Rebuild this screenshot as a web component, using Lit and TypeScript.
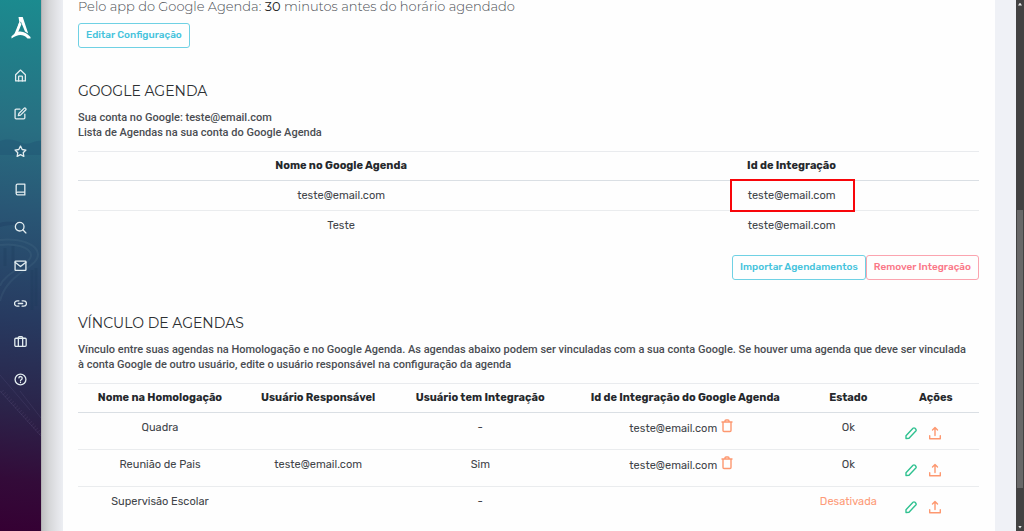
import { LitElement, html, css, svg, nothing } from "lit";
import { customElement } from "lit/decorators.js";

const menu = [
  { label: "Início", icon: svg`<path d="M3 10.500 12 2l9 8.500V22H3z"/><path d="M8.500 22v-8q0-1 1-1h5q1 0 1 1v8"/>` },
  { label: "Editar", icon: svg`<path d="M11 4H4q-2 0-2 2v14q0 2 2 2h14q2 0 2-2v-7"/><path d="m18.500 2.500a2 2 0 0 1 3 3L12 15l-4 1 1-4z"/>` },
  { label: "Favoritos", icon: svg`<path d="m12 2 3.100 6.300 6.900 1-5 4.900 1.200 6.800-6.200-3.200L5.800 21 7 14.200 2 9.300l6.900-1z"/>` },
  { label: "Cadastros", icon: svg`<path d="M4 19.500V4.500A2.500 2.500 0 0 1 6.500 2H20v20H6.500A2.500 2.500 0 0 1 4 19.500 2.500 2.500 0 0 1 6.500 17H20"/>` },
  { label: "Pesquisar", icon: svg`<circle cx="10.500" cy="10.500" r="8"/><path d="m22 22-5.700-5.700"/>` },
  { label: "Mensagens", icon: svg`<rect x="2" y="4" width="20" height="17" rx="1"/><path d="m2 6 10 8 10-8"/>` },
  { label: "Links", icon: svg`<path d="M15 7h3a5 5 0 0 1 0 10h-3M9 17H6A5 5 0 0 1 6 7h3M8 12h8"/>` },
  { label: "Negócios", icon: svg`<rect x="1.500" y="6" width="21" height="15" rx="2"/><path d="M8 21V5q0-2 2-2h4q2 0 2 2v16"/>` },
  { label: "Ajuda", icon: svg`<circle cx="12" cy="12" r="10"/><path d="M9 9a3 3 0 0 1 6 1c0 2-3 2.500-3 4M12 17v.500"/>` },
];

const calendars = [
  { name: "teste@email.com", id: "teste@email.com", marked: true },
  { name: "Teste", id: "teste@email.com", marked: false },
];

const links = [
  { name: "Quadra", user: "", integrated: "-", id: "teste@email.com", state: "Ok" },
  { name: "Reunião de Pais", user: "teste@email.com", integrated: "Sim", id: "teste@email.com", state: "Ok" },
  { name: "Supervisão Escolar", user: "", integrated: "-", id: "", state: "Desativada" },
];

@customElement("side-menu")
class SideMenu extends LitElement {
  static styles = css`
    :host {
      display: block;
      position: relative;
      overflow: hidden;
      background: linear-gradient(188deg, #1b8b8f 0%, #286f82 24%, #295675 40%, #273a60 60%, #2b2349 77%, #330b39 90%, #350033 100%);
      box-shadow: 0 0 1px #777;
    }
    .scene { position: absolute; inset: 0; width: 100%; height: 100%; }
    nav { position: relative; display: flex; flex-direction: column; align-items: center; }
    a { display: flex; align-items: center; justify-content: center; width: 100%; height: 38px; color: #e3edf0; }
    .brand { height: 56px; color: #fff; }
    .brand svg { width: 20px; height: 24px; }
    .icon { width: 13px; height: 13px; fill: none; stroke: currentColor; stroke-width: 2.400; stroke-linecap: round; stroke-linejoin: round; }
  `;
  render() {
    return html`
      <svg class="scene" viewBox="0 0 41 531" preserveAspectRatio="none" aria-hidden="true" fill="none">
        <path d="M0 141c9-3 15-1 22 2s14-4 19-2v14H0z" fill="#1f5274" opacity=".4"/>
        <path d="M0 223c8-3 16 1 25-3-5 6-16 4-25 7z" fill="#1f4265" opacity=".5"/>
        <path d="M0 240c20-2 37 4 38 14 1 14-31 18-38 47M0 245c15-2 30 2 31 10 0 10-26 17-31 31" stroke="#6b91a6" stroke-width="2" opacity=".12"/>
        <path d="M5 248v18M13 246v16M32 270v40M36 268v38" stroke="#183858" stroke-width="3" opacity=".25"/>
        <path d="M0 391l41 45M20 391l21 27M0 375l30 35" stroke="#7b70a0" opacity=".16"/>
        <path d="M2 391l39 43" stroke="#8f7da8" stroke-width="4" stroke-dasharray="1 2" opacity=".12"/>
      </svg>
      <nav aria-label="Menu principal">
        <a class="brand" href="#" aria-label="Página inicial">
          <svg viewBox="0 0 20 24" fill="currentColor"><path d="M7.500 1h4.200l5.500 16.500-3.200-2L9.800 5.500 6.300 16c5.200-1.500 9.200 1 13.200 5v1.500h-3C11.500 17.500 6.500 18.500 .500 22.500v-2.300L5 16.500 8.300 6z"/><path d="M8.300 6 3 19l4-2.500L10.500 8z"/></svg>
        </a>
        ${menu.map((m) => html`<a href="#" aria-label=${m.label}><svg class="icon" viewBox="0 0 24 24">${m.icon}</svg></a>`)}
      </nav>`;
  }
}

@customElement("scroll-rail")
class ScrollRail extends LitElement {
  static styles = css`
    :host { display: grid; grid-template-rows: 8px 202fr 278fr 35fr 8px; background: #424242; justify-items: center; align-items: center; }
    .thumb { grid-row: 3; width: 6px; height: 100%; background: #686868; }
    .up, .down { width: 4px; height: 3px; background: #e8e8e8; clip-path: polygon(50% 0, 100% 100%, 0 100%); }
    .up { grid-row: 1; }
    .down { grid-row: 5; clip-path: polygon(0 0, 100% 0, 50% 100%); }
  `;
  render() {
    return html`<span class="up"></span><span class="thumb"></span><span class="down"></span>`;
  }
}

@customElement("app-root")
class AppRoot extends LitElement {
  static styles = css`
    :host {
      display: grid;
      grid-template-columns: 41px minmax(0, 1fr) 8px;
      height: 100vh;
      overflow: hidden;
      font: 11px/16px Rubik, Roboto, sans-serif;
      color: #414449;
    }
    main {
      overflow: hidden;
      padding: 0 21px 0 22px;
      background: linear-gradient(90deg, #bdbdbf 0, #d5d6d8 8px, #e3e4e8 16px, #eff1f6 24px);
    }
    .card { min-height: 100%; padding: 0 16px 0 15px; background: #fefefe; }
    .lead { margin: 0 0 11px; font: 300 13px/12px Montserrat, "Open Sans", sans-serif; color: #4c4f54; }
    .lead strong { font-weight: 400; color: #222; }
    h2 { margin: 0; padding: 34px 0 10px; font: 400 14px/18px Montserrat, Inter, sans-serif; color: #2c2f32; }
    p { margin: 0; }
    .note { font: 500 11px/15px Roboto, sans-serif; margin-bottom: 11px; color: #4a4d52; }
    button { font: inherit; background: none; border: 0; padding: 0; cursor: pointer; }
    .btn { height: 25px; padding: 0 7px; border: 1px solid; border-radius: 3px; font-size: 10px; font-weight: 500; line-height: 15px; }
    .info { color: #45c3dc; border-color: #6fd1e4; }
    .danger { color: #fa7787; border-color: #fba4af; }
    .tools { display: flex; justify-content: flex-end; padding-top: 15px; }
    table { width: 100%; border-collapse: collapse; table-layout: fixed; text-align: center; }
    th { height: 28px; padding: 0; border-top: 1px solid #e9ebee; border-bottom: 1px solid #dadfe4; font-weight: 700; color: #25282c; }
    td { height: 29px; padding: 0; border-top: 1px solid #eaecee; }
    .links td { height: 29px; padding: 7px 0 0; vertical-align: top; }
    .c58 { width: 58.400%; }
    .c18 { width: 18.200%; }
    .c17 { width: 16.900%; }
    .c19 { width: 19.100%; }
    .c26 { width: 26.400%; }
    .c10 { width: 9.800%; }
    .mark { position: relative; }
    .mark::after { content: ""; position: absolute; inset: -10px -19px -10px -18px; border: 2px solid #f8060a; }
    .off { color: #fd9b78; }
    .ident { display: flex; justify-content: center; gap: 4px; padding: 1px 8px 0 0; }
    .ident button { height: 14px; margin-top: -2px; }
    .acts { display: flex; justify-content: center; gap: 12px; padding: 6px 26px 0 0; }
    .ic { display: block; width: 12px; height: 14px; fill: none; stroke: currentColor; stroke-width: 1.400; stroke-linejoin: round; stroke-linecap: round; }
    .orange { color: #fd9870; }
    .green { color: #2fc190; }
  `;

  render() {
    return html`
      <side-menu></side-menu>
      <main>
        <div class="card">
          <p class="lead">Pelo app do Google Agenda: <strong>30</strong> minutos antes do horário agendado</p>
          <button class="btn info">Editar Configuração</button>

          <h2>GOOGLE AGENDA</h2>
          <p class="note">Sua conta no Google: teste@email.com<br />Lista de Agendas na sua conta do Google Agenda</p>
          <table>
            <colgroup><col class="c58" /><col /></colgroup>
            <thead><tr><th>Nome no Google Agenda</th><th>Id de Integração</th></tr></thead>
            <tbody>
              ${calendars.map((c) => html`<tr><td>${c.name}</td><td><span class=${c.marked ? "mark" : "plain"}>${c.id}</span></td></tr>`)}
            </tbody>
          </table>
          <div class="tools">
            <button class="btn info">Importar Agendamentos</button>
            <button class="btn danger">Remover Integração</button>
          </div>

          <h2>VÍNCULO DE AGENDAS</h2>
          <p class="note">Vínculo entre suas agendas na Homologação e no Google Agenda. As agendas abaixo podem ser vinculadas com a sua conta Google. Se houver uma agenda que deve ser vinculada<br />à conta Google de outro usuário, edite o usuário responsável na configuração da agenda</p>
          <table class="links">
            <colgroup><col class="c18" /><col class="c17" /><col class="c19" /><col class="c26" /><col class="c10" /><col /></colgroup>
            <thead><tr>
              <th>Nome na Homologação</th><th>Usuário Responsável</th><th>Usuário tem Integração</th>
              <th>Id de Integração do Google Agenda</th><th>Estado</th><th>Ações</th>
            </tr></thead>
            <tbody>
              ${links.map((l) => html`<tr>
                <td>${l.name}</td>
                <td>${l.user}</td>
                <td>${l.integrated}</td>
                <td>${l.id
                  ? html`<div class="ident">${l.id}<button class="orange" aria-label="Remover vínculo">
                      <svg class="ic" viewBox="0 0 12 14"><path d="M1 3h10M2 3v8.500a1 1 0 0 0 1 1h6a1 1 0 0 0 1-1V3M4 3V2a1 1 0 0 1 1-1h2a1 1 0 0 1 1 1v1"/></svg></button></div>`
                  : nothing}</td>
                <td class=${l.state === "Ok" ? "on" : "off"}>${l.state}</td>
                <td><div class="acts">
                  <button class="green" aria-label="Editar"><svg class="ic" viewBox="0 0 12 14"><path d="M1 12.500v-2.800L8 2.300q1-.800 2 0l.800.900q.700 1 0 1.800L4 12.200z"/></svg></button>
                  <button class="orange" aria-label="Enviar"><svg class="ic" viewBox="0 0 12 14"><path d="M.700 9.800v2.900h10.600V9.800M6 9.500v-8M3.500 4 6 1.500 8.500 4"/></svg></button>
                </div></td>
              </tr>`)}
            </tbody>
          </table>
        </div>
      </main>
      <scroll-rail></scroll-rail>`;
  }
}
